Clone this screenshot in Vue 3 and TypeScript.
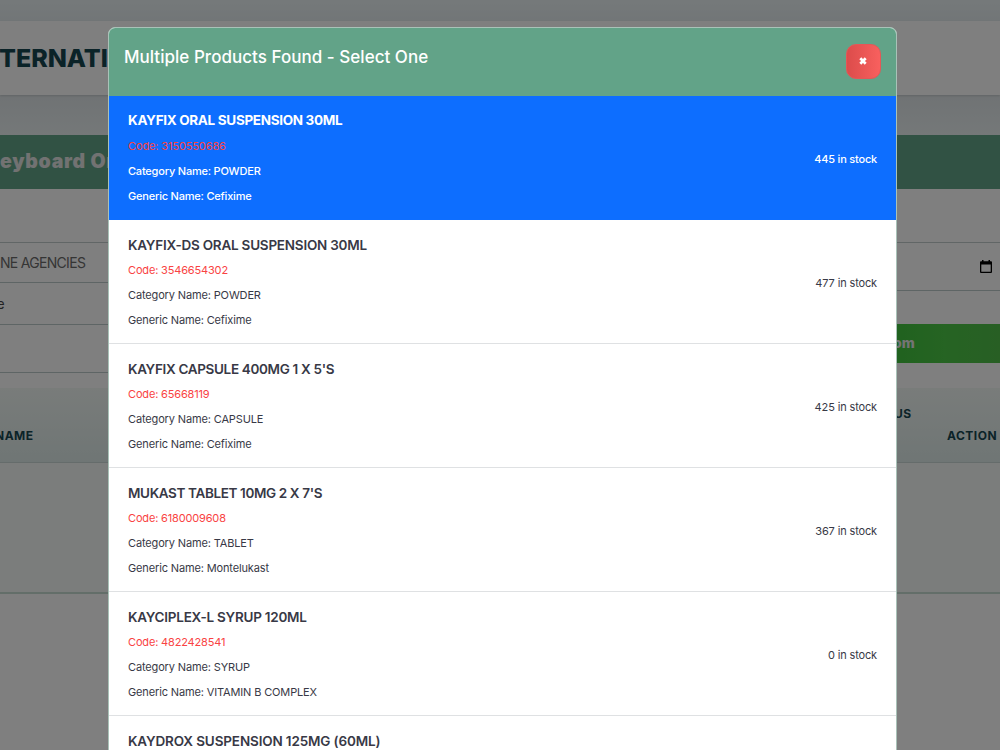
<script setup lang="ts">
interface Product {
  name: string
  code: string
  category: string
  generic: string
  stock: number
  tracking: number
}

const products: Product[] = [
  { name: 'KAYFIX ORAL SUSPENSION 30ML', code: '3150550686', category: 'POWDER', generic: 'Cefixime', stock: 445, tracking: -0.32 },
  { name: 'KAYFIX-DS ORAL SUSPENSION 30ML', code: '3546654302', category: 'POWDER', generic: 'Cefixime', stock: 477, tracking: -0.23 },
  { name: "KAYFIX CAPSULE 400MG 1 X 5'S", code: '65668119', category: 'CAPSULE', generic: 'Cefixime', stock: 425, tracking: -0.33 },
  { name: "MUKAST TABLET 10MG 2 X 7'S", code: '6180009608', category: 'TABLET', generic: 'Montelukast', stock: 367, tracking: -0.37 },
  { name: 'KAYCIPLEX-L SYRUP 120ML', code: '4822428541', category: 'SYRUP', generic: 'VITAMIN B COMPLEX', stock: 0, tracking: -0.25 },
  { name: 'KAYDROX SUSPENSION 125MG (60ML)', code: '', category: '', generic: '', stock: 0, tracking: -0.14 },
]
const selected = 0
</script>

<template>
  <div class="screen">
    <div class="page">
      <div class="top-strip"></div>
      <header class="masthead"><span class="brand">TERNATI</span></header>
      <div class="gap-strip"></div>
      <div class="banner"><span class="banner-text">eyboard Or</span></div>
      <section class="form">
        <div class="form-left">
          <div class="blank"></div>
          <div class="field agency"><span>NE AGENCIES</span></div>
          <div class="field narrow"><span>e</span></div>
          <div class="field tall"></div>
        </div>
        <div class="form-right">
          <div class="blank"></div>
          <div class="field date">
            <svg width="12" height="13" viewBox="0 0 12 13"><path fill="#000" fill-rule="evenodd" d="M2 0h1.500v1.300h5V0H10v1.300h1q1 0 1 1V12q0 1-1 1H1q-1 0-1-1V2.300q0-1 1-1h1zM1.300 4.500v7.200h9.400V4.500z" /></svg>
          </div>
          <div class="add-item">om</div>
        </div>
      </section>
      <div class="table-head">
        <span class="th-name">NAME</span>
        <div class="th-right"><span>US</span><span class="th-action">ACTION</span></div>
      </div>
      <div class="table-body"></div>
    </div>

    <div class="backdrop"></div>

    <div class="modal">
      <div class="modal-head">
        <h5 class="title">Multiple Products Found - Select One</h5>
        <button class="close" type="button" aria-label="Close">
          <svg width="8" height="8" viewBox="0 0 8 8"><path d="M1.300 1.300 6.700 6.700M6.700 1.300 1.300 6.700" stroke="#fff" stroke-width="2.700" /></svg>
        </button>
      </div>
      <ul class="list">
        <li v-for="(p, i) in products" :key="p.name" class="item" :class="{ active: i === selected }">
          <div class="info">
            <strong class="name" :style="{ letterSpacing: p.tracking + 'px' }">{{ p.name }}</strong>
            <template v-if="p.code">
              <span class="line code">Code: {{ p.code }}</span>
              <span class="line">Category Name: {{ p.category }}</span>
              <span class="line">Generic Name: {{ p.generic }}</span>
            </template>
          </div>
          <span v-if="p.code" class="stock">{{ p.stock }} in stock</span>
        </li>
      </ul>
    </div>
  </div>
</template>

<style>
body { margin: 0; overflow: hidden; }
</style>

<style scoped>
* { box-sizing: border-box; }
.screen { position: relative; width: 1000px; height: 750px; overflow: hidden; background: #fff; font-family: Inter, "Noto Sans", sans-serif; }
.page { display: flex; flex-direction: column; white-space: nowrap; }
.top-strip { height: 21px; background: linear-gradient(#ebf3f5, #e4ecef); }
.masthead { height: 74px; background: #fff; display: flex; align-items: center; box-shadow: 0 1px 2px #0002; position: relative; }
.brand { font-size: 25px; font-weight: 800; color: #164650; margin-left: -1px; }
.gap-strip { height: 40px; background: linear-gradient(#e0e6e9, #eaf1f2); }
.banner { height: 54px; background: #62a488; color: #e4e4e4; display: flex; align-items: center; padding-bottom: 2px; }
.banner-text { font-size: 19.5px; font-weight: 900; letter-spacing: 0.7px; }
.form { height: 199px; display: flex; justify-content: space-between; }
.form-left { width: 120px; }
.form-right { width: 110px; }
.blank { height: 54px; border-bottom: 1px solid #c2cdcd; }
.field { border-bottom: 1px solid #bdcaca; color: #6b6b6b; font-size: 14px; display: flex; align-items: center; }
.agency { height: 40px; letter-spacing: -0.7px; }
.narrow { height: 42px; font-size: 13px; color: #444; }
.narrow span { margin-left: -3px; }
.tall { height: 48px; }
.date { height: 48px; justify-content: flex-end; padding: 0 8px 1px 0; }
.add-item { margin-top: 32.5px; height: 39px; background: linear-gradient(90deg, #40c43d, #4cc846 50%, #50be49); color: #e9e9e9; font-size: 14px; font-weight: 800; line-height: 38px; padding-left: 3px; }
.table-head { height: 75px; background: linear-gradient(#f2f8f5, #dfecea); border-bottom: 1px solid #cad9d7; color: #164650; font-size: 12px; font-weight: 700; letter-spacing: 0.5px; display: flex; justify-content: space-between; line-height: 22px; padding-top: 15px; }
.th-name { margin: 22px 0 0 -5px; }
.th-right { width: 106px; display: flex; flex-direction: column; }
.th-action { margin-left: 53px; }
.table-body { height: 131px; background: #f6faf8; border-bottom: 2px solid #c6dcd3; }
.backdrop { position: absolute; inset: 0; background: rgba(0, 0, 0, 0.5); }
.modal { position: absolute; left: 108px; top: 27px; width: 789px; height: 900px; background: #fff; border: 1px solid #a9c2b8; border-radius: 7px; overflow: hidden; }
.modal-head { height: 68px; background: #62a388; display: flex; justify-content: space-between; align-items: flex-start; padding: 16px 15px 0 15px; }
.title { margin: 0; font-size: 17px; font-weight: 500; line-height: 26px; letter-spacing: 0.03px; color: #fff; }
.close { width: 35px; height: 35px; padding: 0 1px 1px 0; border: 1px solid #e45757; border-radius: 10px; background: linear-gradient(90deg, #dc4c4b, #f8605e); display: flex; align-items: center; justify-content: center; }
.list { margin: 0; padding: 0; list-style: none; }
.item { height: 124.1px; border-bottom: 1px solid #dfe1e3; padding: 11.5px 19px 0; display: flex; justify-content: space-between; color: #383946; white-space: nowrap; }
.item.active { background: #0d6eff; border-color: #0d6eff; color: #fff; padding-top: 11px; }
.info { display: flex; flex-direction: column; }
.name { font-size: 13.5px; font-weight: 600; line-height: 27px; }
.line { font-size: 11px; line-height: 24.9px; letter-spacing: -0.14px; }
.code { color: #f94343; letter-spacing: -0.16px; line-height: 23.4px; margin-bottom: 0.7px; }
.stock { align-self: flex-start; margin-top: 39.5px; font-size: 11px; line-height: 25px; letter-spacing: -0.14px; }
.active .name { font-weight: 650; }
.active .line, .active .stock { font-weight: 500; letter-spacing: -0.2px; }
.active .stock { margin-top: 40px; }
.active .code { font-weight: 400; letter-spacing: -0.12px; line-height: 24.5px; }
</style>
